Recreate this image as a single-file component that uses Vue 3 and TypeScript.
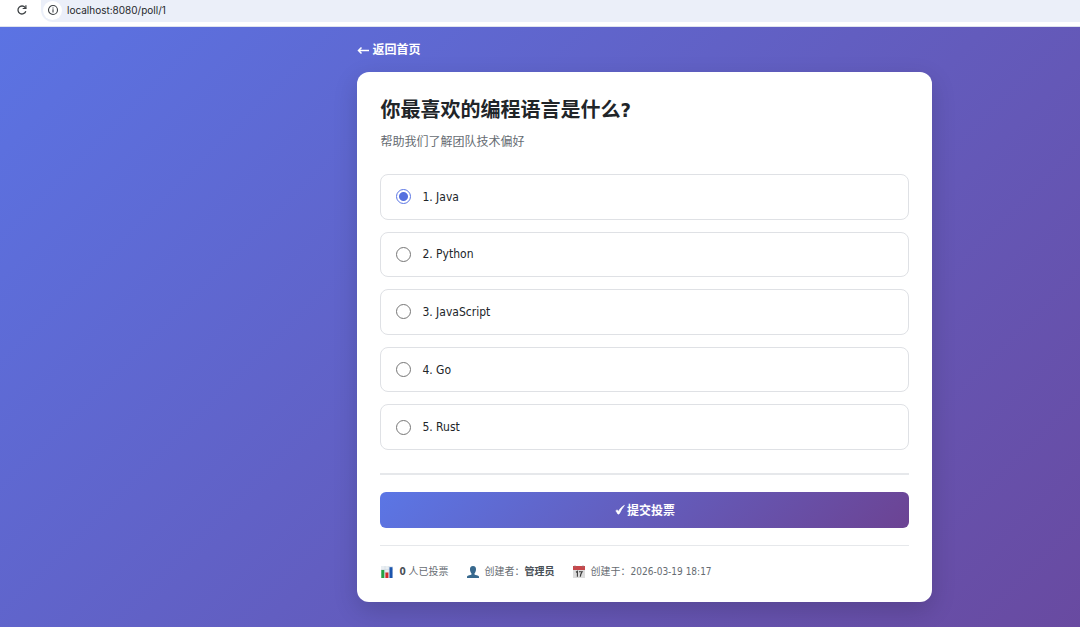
<script setup lang="ts">
import { ref } from 'vue'

const options: string[] = ['Java', 'Python', 'JavaScript', 'Go', 'Rust']
const selected = ref(0)
const address = ref('localhost:8080/poll/1')
const votes = ref(0)
</script>

<template>
  <div class="window">
    <header class="toolbar">
      <button class="reload" type="button" aria-label="重新加载">
        <svg viewBox="0 0 12 12" width="12" height="12">
          <path d="M9.8 7.2A4 4 0 1 1 9.2 3.6L10 4.6" fill="none" stroke="#3c4043" stroke-width="1.3" />
          <path d="M10.5 1.2V5H6.7V3.9H9.3V1.2Z" fill="#3c4043" />
        </svg>
      </button>
      <div class="omnibox">
        <button class="info" type="button" aria-label="网站信息">
          <svg viewBox="0 0 12 12" width="12" height="12">
            <circle cx="6" cy="6" r="4.5" fill="none" stroke="#3c4043" stroke-width="1.1" />
            <path d="M6 5.3V8.4M6 3.5V4.6" stroke="#3c4043" stroke-width="1.1" />
          </svg>
        </button>
        <input v-model="address" class="address" type="text" aria-label="地址栏" spellcheck="false" />
      </div>
    </header>
    <main class="page">
      <div class="container">
        <a class="back" href="#">
          <svg viewBox="0 0 12 10" width="12" height="10" aria-hidden="true">
            <path d="M12 4.5H1.5M4.5 1.5L1.5 4.5L4.5 7.5" fill="none" stroke="currentColor" stroke-width="1.5" />
          </svg>
          返回首页
        </a>
        <form class="card" @submit.prevent>
          <h1>你最喜欢的编程语言是什么?</h1>
          <p class="description">帮助我们了解团队技术偏好</p>
          <div class="options" role="radiogroup" aria-label="编程语言">
            <label v-for="(name, index) in options" :key="name" class="option">
              <input v-model="selected" type="radio" name="language" :value="index" />
              <span>{{ index + 1 }}. {{ name }}</span>
            </label>
          </div>
          <div class="actions">
            <button class="submit" type="submit">
              <svg viewBox="0 0 10 12" width="10" height="12" aria-hidden="true">
                <path d="M0.8 6.8C1.8 5.8 2.8 5.9 3.5 7.4C5 4.6 6.8 2.6 9.4 1.4C7.4 3.8 5.7 6.6 4.4 9.6C3.9 10.3 2.8 10.3 2.5 9.5C2.1 8.4 1.6 7.5 0.8 6.8Z" fill="currentColor" stroke="currentColor" stroke-width="0.7" />
              </svg>
              提交投票
            </button>
          </div>
          <footer class="meta">
            <span class="meta-item">
              <svg viewBox="0 0 14 14" width="14" height="14" aria-hidden="true">
                <rect x="1" y="1" width="12" height="12" fill="#e9eef2" />
                <path d="M1 4.5H13M1 8H13M5 1V13M9 1V13" stroke="#cbd5dc" stroke-width="0.5" />
                <rect x="1.3" y="5" width="3" height="8" fill="#27a343" />
                <rect x="5.4" y="7.5" width="3" height="5.5" fill="#d52b2b" />
                <rect x="9.5" y="2.2" width="3" height="10.8" fill="#1c55ad" />
              </svg>
              <span><strong>{{ votes }}</strong> 人已投票</span>
            </span>
            <span class="meta-item">
              <svg viewBox="0 0 14 14" width="14" height="14" aria-hidden="true">
                <path d="M7 1C4.8 1 3.8 2.5 4 4.6C4 6.5 4.8 7.7 5.5 8.4V9.4C4.5 10 1.6 10.2 1 11.6V13H13V11.6C12.4 10.2 9.5 10 8.5 9.4V8.4C9.2 7.7 10 6.5 10 4.6C10.2 2.5 9.2 1 7 1Z" fill="#38698e" />
              </svg>
              <span>创建者：<strong>管理员</strong></span>
            </span>
            <span class="meta-item">
              <svg viewBox="0 0 14 14" width="14" height="14" aria-hidden="true">
                <path d="M1 1H13V13H1Z" fill="#dcdcdc" />
                <path d="M1 1H13V5H1Z" fill="#c8474b" />
                <path d="M3 0.5V2.5M11 0.5V2.5" stroke="#8b7476" stroke-width="1" />
                <path d="M4 7.2L5.4 6.3V11.8M7 6.7H10.2C9 8.3 8.4 9.8 8.3 11.8" fill="none" stroke="#3c3c3c" stroke-width="1.1" />
              </svg>
              <span>创建于：<time datetime="2026-03-19T18:17">2026-03-19 18:17</time></span>
            </span>
          </footer>
        </form>
      </div>
    </main>
  </div>
</template>

<style>
body {
  margin: 0;
}
</style>

<style scoped>
* {
  box-sizing: border-box;
}

.window {
  display: flex;
  flex-direction: column;
  min-height: 100vh;
  overflow-x: hidden;
  font-family: "DejaVu Sans Condensed", "Noto Sans CJK SC", sans-serif;
  color: #212529;
}

.toolbar {
  display: flex;
  align-items: flex-start;
  gap: 13px;
  height: 27px;
  padding-left: 16px;
  background: #fff;
  border-bottom: 1px solid #dfe3ee;
}

.reload,
.info {
  display: grid;
  place-items: center;
  padding: 0;
  border: 0;
  background: none;
}

.reload {
  width: 12px;
  height: 20px;
}

.omnibox {
  display: flex;
  flex: 1;
  align-items: center;
  gap: 5px;
  height: 22px;
  padding: 0 0 2px 2px;
  border-radius: 0 0 0 12px;
  background: #ebeff9;
}

.info {
  width: 19px;
  height: 19px;
  border-radius: 50%;
  background: #fff;
}

.address {
  flex: 1;
  min-width: 0;
  padding: 0;
  border: 0;
  outline: 0;
  background: none;
  font: 10px/16px Inter, sans-serif;
  color: #26282b;
}

.page {
  flex: 1;
  padding: 13px 0 24px calc(33% + 1px);
  background: linear-gradient(135deg, #5b73e3 0%, #6a469a 110%);
}

.container {
  width: 80%;
  max-width: 575px;
}

.back {
  display: flex;
  align-items: center;
  gap: 3px;
  width: max-content;
  margin-bottom: 11px;
  font-size: 12px;
  font-weight: 700;
  line-height: 21px;
  color: #fff;
  text-decoration: none;
}

.card {
  padding: 23px 23px 21px;
  border-radius: 12px;
  background: #fff;
  box-shadow: 0 8px 24px rgba(0, 0, 0, 0.16);
}

h1 {
  margin: 0 0 8px;
  font-size: 20px;
  font-weight: 700;
  line-height: 30px;
}

.description {
  margin: 0 0 23px;
  font-size: 12px;
  line-height: 18px;
  color: #666c72;
}

.options {
  display: grid;
  grid-auto-rows: 1fr;
  gap: 12px;
  min-height: 276px;
}

.option {
  display: flex;
  align-items: center;
  gap: 11px;
  padding: 0 15px;
  border: 1px solid #dfe1e5;
  border-radius: 8px;
  font-size: 12px;
  line-height: 18px;
  cursor: pointer;
}

.option input {
  appearance: none;
  width: 15px;
  height: 15px;
  margin: 0;
  border: 1px solid #767676;
  border-radius: 50%;
  background: #fff;
}

.option input:checked {
  border-color: #5b76e5;
  background: radial-gradient(circle, #5570df 4px, #fff 5px);
}

.actions {
  margin-top: 23px;
  padding: 17px 0;
  border-top: 2px solid #e6e8eb;
  border-bottom: 1px solid #e6e8eb;
}

.submit {
  display: flex;
  align-items: center;
  justify-content: center;
  gap: 2px;
  width: 100%;
  height: 36px;
  padding: 0;
  border: 0;
  border-radius: 6px;
  background: linear-gradient(135deg, #5b76e5, #6c4393);
  font: 700 12px/18px "Noto Sans CJK SC", sans-serif;
  color: #fff;
}

.meta {
  display: flex;
  flex-wrap: wrap;
  gap: 17px;
  padding-top: 17px;
  font-size: 10px;
  line-height: 18px;
  color: #666c72;
}

.meta-item {
  display: flex;
  align-items: center;
  gap: 5px;
}

.meta strong {
  color: #495057;
}
</style>
